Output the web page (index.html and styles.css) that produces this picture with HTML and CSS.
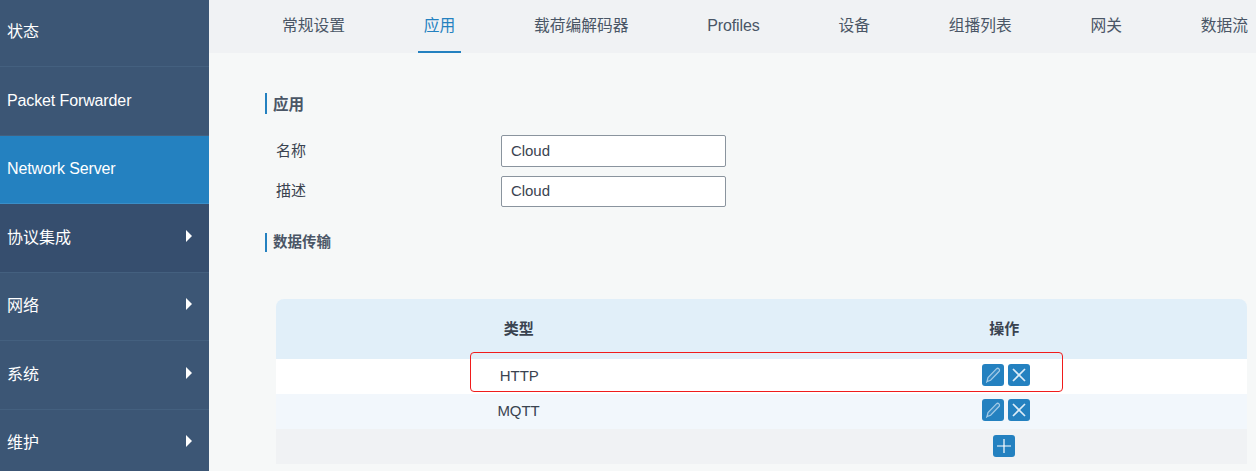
FILE: index.html
```html
<!DOCTYPE html>
<html lang="zh-CN">
<head>
<meta charset="utf-8">
<title>应用</title>
<link rel="stylesheet" href="styles.css">
</head>
<body>
<div class="app">
  <nav class="sidebar">
    <a class="nav-item first">状态</a>
    <a class="nav-item latin">Packet Forwarder</a>
    <a class="nav-item latin active">Network Server</a>
    <a class="nav-item dark">协议集成<span class="caret"></span></a>
    <a class="nav-item up">网络<span class="caret"></span></a>
    <a class="nav-item">系统<span class="caret"></span></a>
    <a class="nav-item up">维护<span class="caret"></span></a>
  </nav>
  <main class="main">
    <div class="tabs">
      <a class="tab">常规设置</a>
      <a class="tab current">应用</a>
      <a class="tab">载荷编解码器</a>
      <a class="tab latin">Profiles</a>
      <a class="tab">设备</a>
      <a class="tab">组播列表</a>
      <a class="tab">网关</a>
      <a class="tab">数据流</a>
    </div>
    <div class="content">
      <h2 class="section-title large">应用</h2>
      <div class="form">
        <label class="field"><span class="field-label">名称</span><input class="input" value="Cloud"></label>
        <label class="field"><span class="field-label">描述</span><input class="input" value="Cloud"></label>
      </div>
      <h2 class="section-title second">数据传输</h2>
      <div class="table-wrap">
        <div class="row head"><div class="cell">类型</div><div class="cell">操作</div></div>
        <div class="row white">
          <div class="cell value http">HTTP</div>
          <div class="cell actions">
            <button class="btn"><svg viewBox="0 0 22 22"><path class="soft" d="M5 17.5l1-4 8.4-8.6c.7-.7 1.9-.7 2.6 0 .7.7.7 1.9 0 2.6L8.6 16.2zM5 17.5l-.6 1.2"/></svg></button>
            <button class="btn"><svg viewBox="0 0 22 22"><path class="cross" d="M5 5l12 12M17 5L5 17"/></svg></button>
          </div>
        </div>
        <div class="row tint">
          <div class="cell value">MQTT</div>
          <div class="cell actions">
            <button class="btn"><svg viewBox="0 0 22 22"><path class="soft" d="M5 17.5l1-4 8.4-8.6c.7-.7 1.9-.7 2.6 0 .7.7.7 1.9 0 2.6L8.6 16.2zM5 17.5l-.6 1.2"/></svg></button>
            <button class="btn"><svg viewBox="0 0 22 22"><path class="cross" d="M5 5l12 12M17 5L5 17"/></svg></button>
          </div>
        </div>
        <div class="row grey">
          <div class="cell"></div>
          <div class="cell add"><button class="btn"><svg viewBox="0 0 22 22"><path d="M11 4v14M4 11h14"/></svg></button></div>
        </div>
        <div class="highlight"></div>
      </div>
    </div>
  </main>
</div>
</body>
</html>
```
FILE: styles.css
```css
* { box-sizing: border-box; }
html, body { margin: 0; height: 100%; overflow: hidden; }
body {
  font-family: "Liberation Sans", "Noto Sans CJK SC", sans-serif;
  font-size: 15px;
  color: #3a4350;
}
.app { display: flex; height: 471px; background: #f6f8f8; }

.sidebar { width: 209px; flex: none; background: #3c5675; display: flex; flex-direction: column; overflow: hidden; }
.nav-item {
  height: 68.5px;
  flex: none;
  display: flex;
  align-items: center;
  justify-content: space-between;
  padding: 0 17px 3.5px 7px;
  color: #fff;
  font-size: 16px;
  border-bottom: 1px solid #44607f;
}
.nav-item.first { height: 67px; padding-bottom: 6px; }
.nav-item.up { padding-bottom: 5.5px; }
.nav-item.latin { padding-bottom: 0; letter-spacing: -0.12px; }
.nav-item.active { background: #2481c0; border-bottom-color: #3a8ec8; }
.nav-item.dark { background: #364e6e; }
.nav-item:last-child { border-bottom: 0; }
.caret {
  width: 0; height: 0;
  border-left: 6px solid #fff;
  border-top: 6px solid transparent;
  border-bottom: 6px solid transparent;
}

.main { flex: 1; min-width: 0; }
.tabs {
  height: 53px;
  background: #f0f2f4;
  display: flex;
  gap: 66.75px;
  padding-left: 67px;
  white-space: nowrap;
  overflow: hidden;
}
.tab {
  flex: none;
  height: 53px;
  padding: 0 6px 5px;
  display: flex;
  align-items: center;
  font-size: 15.75px;
  color: #4a5666;
}
.tab.latin { font-size: 16px; letter-spacing: -0.12px; padding-bottom: 1px; }
.tab.current { color: #2481c0; border-bottom: 2px solid #2481c0; padding-bottom: 3px; }

.content { padding: 40px 9px 0 56px; }
.section-title {
  margin: 0;
  height: 21px;
  line-height: 21px;
  padding-left: 6px;
  border-left: 2px solid #2481c0;
  font-size: 15px;
  font-weight: 700;
  color: #4a5666;
}
.section-title.large { font-size: 15.5px; line-height: 23px; }
.section-title.second { height: 19px; line-height: 19px; margin-top: 26px; font-size: 14.5px; }

.form { margin: 21px 0 0 11px; display: flex; flex-direction: column; gap: 9px; }
.field { display: flex; align-items: center; }
.field-label { width: 225px; flex: none; font-size: 15px; color: #3a4350; margin-top: -3px; }
.input {
  width: 225px;
  height: 31.5px;
  padding: 0 9px 1px;
  border: 1px solid #8a949e;
  border-radius: 2px;
  background: #fff;
  font: 15px "Liberation Sans", sans-serif;
  letter-spacing: -0.05px;
  color: #3a4350;
}

.table-wrap { position: relative; margin: 47px 0 0 11px; }
.row { display: flex; height: 35px; }
.cell { flex: 1; display: flex; align-items: center; justify-content: center; padding-bottom: 2px; }
.value { padding-left: 1px; letter-spacing: -0.1px; }
.value.http { padding-left: 2px; }
.head { height: 60px; background: #e1eff9; border-radius: 8px 8px 0 0; font-weight: 700; }
.head .cell { padding-bottom: 4px; }
.white { background: #fff; }
.tint { background: #f2f7fc; }
.grey { background: #f0f2f4; }
.actions { gap: 4px; padding-bottom: 4px; padding-left: 4px; }
.add { padding-bottom: 1px; padding-left: 0; }
.btn {
  width: 22px;
  height: 22px;
  padding: 0;
  border: 0;
  border-radius: 3px;
  background: #2481c0;
  display: block;
}
.btn svg { display: block; width: 22px; height: 22px; fill: none; stroke: #fff; stroke-width: 1.2; }
.btn svg .soft { stroke: #a3cbe7; stroke-width: 1.2; fill: rgba(255, 255, 255, .08); }
.btn svg .cross { stroke: #dcecf7; stroke-width: 1.7; }
.highlight {
  position: absolute;
  left: 194px;
  top: 53px;
  width: 593px;
  height: 40px;
  border: 1px solid #f01c1c;
  border-radius: 4px;
  pointer-events: none;
}
```
